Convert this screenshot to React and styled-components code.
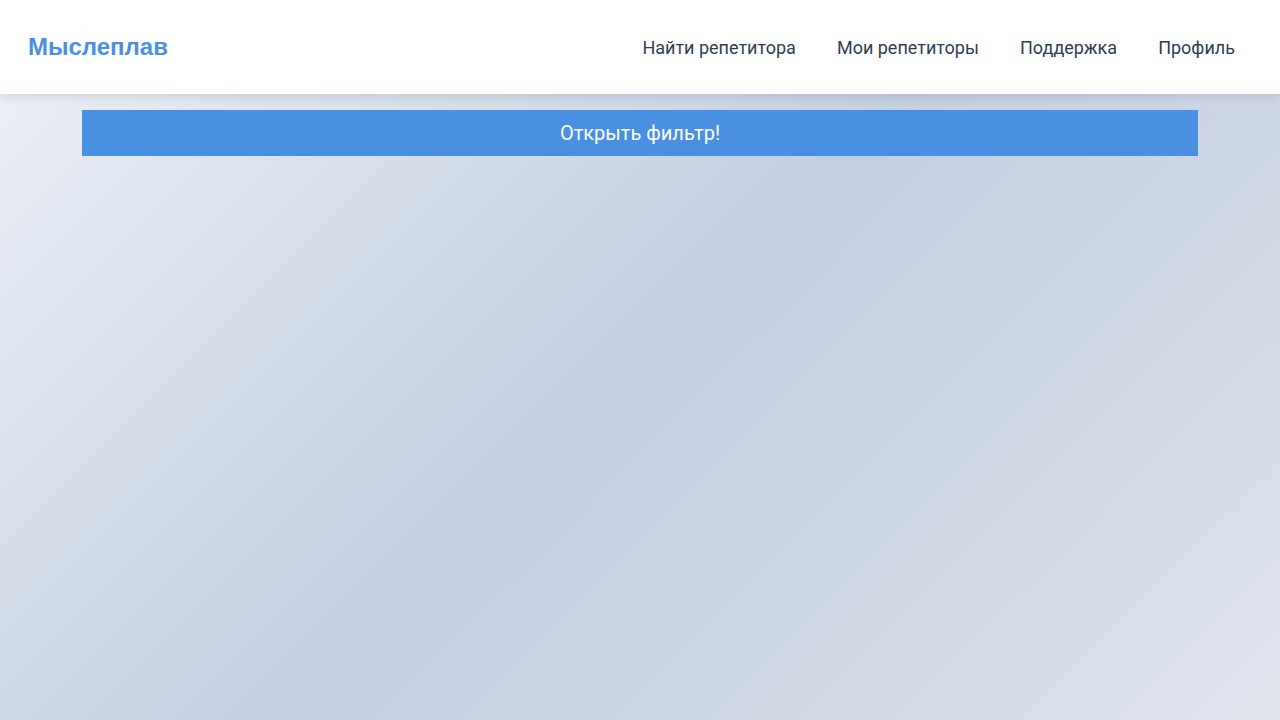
import React from "react";
import styled, { createGlobalStyle } from "styled-components";

const GlobalStyle = createGlobalStyle`
  html, body {
    margin: 0;
    padding: 0;
  }
  body {
    font-family: Roboto, "Liberation Sans", sans-serif;
    background: linear-gradient(135deg, #eef1f7 0%, #c3cfe2 50%, #dfe3ec 100%);
    min-height: 100vh;
  }
`;

const Page = styled.div`
  min-height: 100vh;
`;

const Header = styled.header`
  height: 94px;
  background: #fff;
  display: flex;
  align-items: center;
  justify-content: space-between;
  padding: 0 45px 0 28px;
  box-shadow: 0 2px 10px rgba(0, 0, 0, 0.12);
  box-sizing: border-box;
`;

const Logo = styled.a`
  font-family: "Liberation Sans", Arial, sans-serif;
  font-weight: 700;
  font-size: 24px;
  color: #4a90e2;
  text-decoration: none;
`;

const Nav = styled.nav`
  display: flex;
  gap: 41px;
`;

const NavLink = styled.a`
  font-size: 18px;
  color: #2c3e50;
  text-decoration: none;
  cursor: pointer;
`;

const Main = styled.main`
  padding: 16px 20px;
`;

const FilterButton = styled.button`
  display: block;
  width: 90%;
  height: 46px;
  margin: 0 auto;
  border: none;
  background: #4a90e2;
  color: #fff;
  font-family: Roboto, "Liberation Sans", sans-serif;
  font-size: 20px;
  cursor: pointer;
`;

const links = ["Найти репетитора", "Мои репетиторы", "Поддержка", "Профиль"];

const App = () => {
  return (
    <>
      <GlobalStyle />
      <Page>
        <Header>
          <Logo>Мыслеплав</Logo>
          <Nav>
            {links.map(l => (
              <NavLink key={l}>{l}</NavLink>
            ))}
          </Nav>
        </Header>
        <Main>
          <FilterButton>Открыть фильтр!</FilterButton>
        </Main>
      </Page>
    </>
  );
};

export default App;
